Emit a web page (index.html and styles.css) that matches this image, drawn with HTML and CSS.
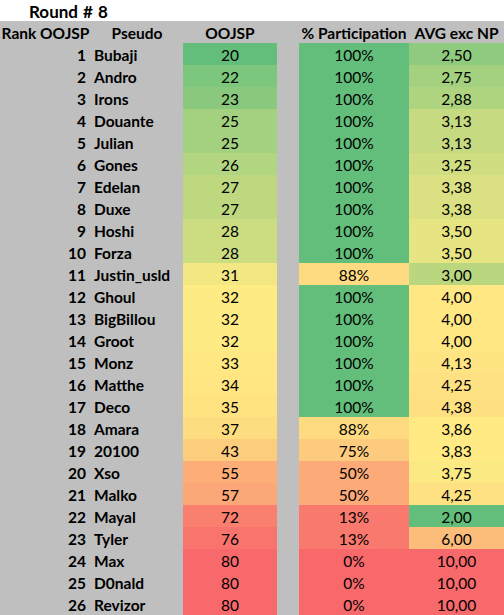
FILE: index.html
```html
<!DOCTYPE html>
<html>
<head>
<meta charset="utf-8">
<link rel="stylesheet" href="styles.css">
</head>
<body>
<div class="title">Round # 8</div>
<div class="sheet">
  <div class="row head"><span class="c-a">Rank OOJSP</span><span class="c-b c-center">Pseudo</span><span class="c-c">OOJSP</span><span class="c-d"></span><span class="c-e">% Participation</span><span class="c-f">AVG exc NP</span></div>
  <div class="row"><span class="c-a">1</span><span class="c-b">Bubaji</span><span class="c-c" style="background:rgb(99,190,123)">20</span><span class="c-d"></span><span class="c-e" style="background:rgb(99,190,123)">100%</span><span class="c-f" style="background:rgb(143,203,126)">2,50</span></div>
  <div class="row"><span class="c-a">2</span><span class="c-b">Andro</span><span class="c-c" style="background:rgb(125,198,125)">22</span><span class="c-d"></span><span class="c-e" style="background:rgb(99,190,123)">100%</span><span class="c-f" style="background:rgb(164,209,127)">2,75</span></div>
  <div class="row"><span class="c-a">3</span><span class="c-b">Irons</span><span class="c-c" style="background:rgb(138,201,125)">23</span><span class="c-d"></span><span class="c-e" style="background:rgb(99,190,123)">100%</span><span class="c-f" style="background:rgb(175,212,127)">2,88</span></div>
  <div class="row"><span class="c-a">4</span><span class="c-b">Douante</span><span class="c-c" style="background:rgb(164,209,127)">25</span><span class="c-d"></span><span class="c-e" style="background:rgb(99,190,123)">100%</span><span class="c-f" style="background:rgb(197,218,129)">3,13</span></div>
  <div class="row"><span class="c-a">5</span><span class="c-b">Julian</span><span class="c-c" style="background:rgb(164,209,127)">25</span><span class="c-d"></span><span class="c-e" style="background:rgb(99,190,123)">100%</span><span class="c-f" style="background:rgb(197,218,129)">3,13</span></div>
  <div class="row"><span class="c-a">6</span><span class="c-b">Gones</span><span class="c-c" style="background:rgb(177,213,128)">26</span><span class="c-d"></span><span class="c-e" style="background:rgb(99,190,123)">100%</span><span class="c-f" style="background:rgb(208,221,129)">3,25</span></div>
  <div class="row"><span class="c-a">7</span><span class="c-b">Edelan</span><span class="c-c" style="background:rgb(190,216,128)">27</span><span class="c-d"></span><span class="c-e" style="background:rgb(99,190,123)">100%</span><span class="c-f" style="background:rgb(219,225,130)">3,38</span></div>
  <div class="row"><span class="c-a">8</span><span class="c-b">Duxe</span><span class="c-c" style="background:rgb(190,216,128)">27</span><span class="c-d"></span><span class="c-e" style="background:rgb(99,190,123)">100%</span><span class="c-f" style="background:rgb(219,225,130)">3,38</span></div>
  <div class="row"><span class="c-a">9</span><span class="c-b">Hoshi</span><span class="c-c" style="background:rgb(203,220,129)">28</span><span class="c-d"></span><span class="c-e" style="background:rgb(99,190,123)">100%</span><span class="c-f" style="background:rgb(230,228,131)">3,50</span></div>
  <div class="row"><span class="c-a">10</span><span class="c-b">Forza</span><span class="c-c" style="background:rgb(203,220,129)">28</span><span class="c-d"></span><span class="c-e" style="background:rgb(99,190,123)">100%</span><span class="c-f" style="background:rgb(230,228,131)">3,50</span></div>
  <div class="row"><span class="c-a">11</span><span class="c-b">Justin_usld</span><span class="c-c" style="background:rgb(242,231,131)">31</span><span class="c-d"></span><span class="c-e" style="background:rgb(254,219,129)">88%</span><span class="c-f" style="background:rgb(186,215,128)">3,00</span></div>
  <div class="row"><span class="c-a">12</span><span class="c-b">Ghoul</span><span class="c-c" style="background:rgb(255,235,132)">32</span><span class="c-d"></span><span class="c-e" style="background:rgb(99,190,123)">100%</span><span class="c-f" style="background:rgb(255,231,131)">4,00</span></div>
  <div class="row"><span class="c-a">13</span><span class="c-b">BigBillou</span><span class="c-c" style="background:rgb(255,235,132)">32</span><span class="c-d"></span><span class="c-e" style="background:rgb(99,190,123)">100%</span><span class="c-f" style="background:rgb(255,231,131)">4,00</span></div>
  <div class="row"><span class="c-a">14</span><span class="c-b">Groot</span><span class="c-c" style="background:rgb(255,235,132)">32</span><span class="c-d"></span><span class="c-e" style="background:rgb(99,190,123)">100%</span><span class="c-f" style="background:rgb(255,231,131)">4,00</span></div>
  <div class="row"><span class="c-a">15</span><span class="c-b">Monz</span><span class="c-c" style="background:rgb(255,232,131)">33</span><span class="c-d"></span><span class="c-e" style="background:rgb(99,190,123)">100%</span><span class="c-f" style="background:rgb(255,228,131)">4,13</span></div>
  <div class="row"><span class="c-a">16</span><span class="c-b">Matthe</span><span class="c-c" style="background:rgb(255,230,131)">34</span><span class="c-d"></span><span class="c-e" style="background:rgb(99,190,123)">100%</span><span class="c-f" style="background:rgb(254,225,130)">4,25</span></div>
  <div class="row"><span class="c-a">17</span><span class="c-b">Deco</span><span class="c-c" style="background:rgb(255,227,130)">35</span><span class="c-d"></span><span class="c-e" style="background:rgb(99,190,123)">100%</span><span class="c-f" style="background:rgb(254,223,130)">4,38</span></div>
  <div class="row"><span class="c-a">18</span><span class="c-b">Amara</span><span class="c-c" style="background:rgb(254,221,129)">37</span><span class="c-d"></span><span class="c-e" style="background:rgb(254,219,129)">88%</span><span class="c-f" style="background:rgb(255,234,132)">3,86</span></div>
  <div class="row"><span class="c-a">19</span><span class="c-b">20100</span><span class="c-c" style="background:rgb(253,205,126)">43</span><span class="c-d"></span><span class="c-e" style="background:rgb(253,203,126)">75%</span><span class="c-f" style="background:rgb(255,234,132)">3,83</span></div>
  <div class="row"><span class="c-a">20</span><span class="c-b">Xso</span><span class="c-c" style="background:rgb(252,173,120)">55</span><span class="c-d"></span><span class="c-e" style="background:rgb(252,170,120)">50%</span><span class="c-f" style="background:rgb(251,234,132)">3,75</span></div>
  <div class="row"><span class="c-a">21</span><span class="c-b">Malko</span><span class="c-c" style="background:rgb(251,167,119)">57</span><span class="c-d"></span><span class="c-e" style="background:rgb(252,170,120)">50%</span><span class="c-f" style="background:rgb(254,225,130)">4,25</span></div>
  <div class="row"><span class="c-a">22</span><span class="c-b">Mayal</span><span class="c-c" style="background:rgb(249,127,111)">72</span><span class="c-d"></span><span class="c-e" style="background:rgb(249,121,110)">13%</span><span class="c-f" style="background:rgb(99,190,123)">2,00</span></div>
  <div class="row"><span class="c-a">23</span><span class="c-b">Tyler</span><span class="c-c" style="background:rgb(249,116,109)">76</span><span class="c-d"></span><span class="c-e" style="background:rgb(249,121,110)">13%</span><span class="c-f" style="background:rgb(252,189,123)">6,00</span></div>
  <div class="row"><span class="c-a">24</span><span class="c-b">Max</span><span class="c-c" style="background:rgb(248,105,107)">80</span><span class="c-d"></span><span class="c-e" style="background:rgb(248,105,107)">0%</span><span class="c-f" style="background:rgb(248,105,107)">10,00</span></div>
  <div class="row"><span class="c-a">25</span><span class="c-b">D0nald</span><span class="c-c" style="background:rgb(248,105,107)">80</span><span class="c-d"></span><span class="c-e" style="background:rgb(248,105,107)">0%</span><span class="c-f" style="background:rgb(248,105,107)">10,00</span></div>
  <div class="row"><span class="c-a">26</span><span class="c-b">Revizor</span><span class="c-c" style="background:rgb(248,105,107)">80</span><span class="c-d"></span><span class="c-e" style="background:rgb(248,105,107)">0%</span><span class="c-f" style="background:rgb(248,105,107)">10,00</span></div>
</div>
</body>
</html>
```
FILE: styles.css
```css
html, body {
  margin: 0;
  padding: 0;
  background: #ffffff;
}
body {
  font-family: Lato, "Liberation Sans", sans-serif;
  font-size: 15.5px;
  color: #000;
  width: 504px;
  overflow: hidden;
}
.title {
  height: 21px;
  line-height: 23px;
  padding-left: 29px;
  font-size: 17px;
  font-weight: 700;
  word-spacing: 1px;
  white-space: nowrap;
}
.sheet {
  background: #bfbfbf;
}
.row {
  display: grid;
  grid-template-columns: 91px 92px 94px 22px 110px 95px;
  height: 22px;
  line-height: 24px;
}
.row > span {
  display: block;
  white-space: nowrap;
  overflow: hidden;
}
.c-a {
  text-align: right;
  padding-right: 5px;
  font-weight: 700;
}
.c-b {
  text-align: left;
  padding-left: 3px;
  font-weight: 700;
}
.c-c, .c-e, .c-f {
  text-align: center;
}
.head > span {
  font-weight: 700;
  text-align: center;
  padding: 0;
  overflow: visible;
}
```
